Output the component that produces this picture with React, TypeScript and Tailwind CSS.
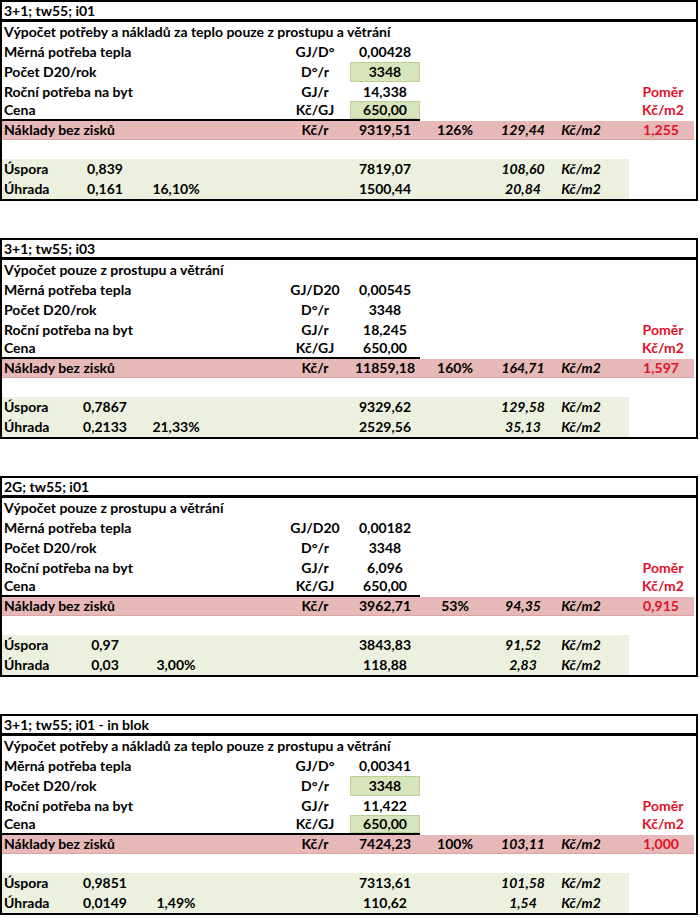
import React from "react";

type Block = {
  title: string;
  heading: string;
  unit1: string;
  merna: string;
  pocet: string;
  rocni: string;
  cena: string;
  boxed: boolean;
  naklady: string;
  pct: string;
  nakM2: string;
  pomer: string;
  uspora: string;
  usporaKc: string;
  usporaM2: string;
  uhrada: string;
  uhradaPct: string;
  uhradaKc: string;
  uhradaM2: string;
};

const blocks: Block[] = [
  {
    title: "3+1; tw55; i01",
    heading: "Výpočet potřeby a nákladů za teplo pouze z prostupu a větrání",
    unit1: "GJ/D°",
    merna: "0,00428",
    pocet: "3348",
    rocni: "14,338",
    cena: "650,00",
    boxed: true,
    naklady: "9319,51",
    pct: "126%",
    nakM2: "129,44",
    pomer: "1,255",
    uspora: "0,839",
    usporaKc: "7819,07",
    usporaM2: "108,60",
    uhrada: "0,161",
    uhradaPct: "16,10%",
    uhradaKc: "1500,44",
    uhradaM2: "20,84",
  },
  {
    title: "3+1; tw55; i03",
    heading: "Výpočet pouze z prostupu a větrání",
    unit1: "GJ/D20",
    merna: "0,00545",
    pocet: "3348",
    rocni: "18,245",
    cena: "650,00",
    boxed: false,
    naklady: "11859,18",
    pct: "160%",
    nakM2: "164,71",
    pomer: "1,597",
    uspora: "0,7867",
    usporaKc: "9329,62",
    usporaM2: "129,58",
    uhrada: "0,2133",
    uhradaPct: "21,33%",
    uhradaKc: "2529,56",
    uhradaM2: "35,13",
  },
  {
    title: "2G; tw55; i01",
    heading: "Výpočet pouze z prostupu a větrání",
    unit1: "GJ/D20",
    merna: "0,00182",
    pocet: "3348",
    rocni: "6,096",
    cena: "650,00",
    boxed: false,
    naklady: "3962,71",
    pct: "53%",
    nakM2: "94,35",
    pomer: "0,915",
    uspora: "0,97",
    usporaKc: "3843,83",
    usporaM2: "91,52",
    uhrada: "0,03",
    uhradaPct: "3,00%",
    uhradaKc: "118,88",
    uhradaM2: "2,83",
  },
  {
    title: "3+1; tw55; i01 - in blok",
    heading: "Výpočet potřeby a nákladů za teplo pouze z prostupu a větrání",
    unit1: "GJ/D°",
    merna: "0,00341",
    pocet: "3348",
    rocni: "11,422",
    cena: "650,00",
    boxed: true,
    naklady: "7424,23",
    pct: "100%",
    nakM2: "103,11",
    pomer: "1,000",
    uspora: "0,9851",
    usporaKc: "7313,61",
    usporaM2: "101,58",
    uhrada: "0,0149",
    uhradaPct: "1,49%",
    uhradaKc: "110,62",
    uhradaM2: "1,54",
  },
];

// column widths, measured from the sheet
const A = "w-[68px] shrink-0 pl-[2px] whitespace-nowrap";
const B = "w-[70px] shrink-0 text-center";
const C = "w-[72px] shrink-0 text-center";
const D = "w-[68px] shrink-0";
const E = "w-[70px] shrink-0 text-center";
const F = "w-[70px] shrink-0 text-center";
const G = "w-[70px] shrink-0 text-center";
const H = "w-[66px] shrink-0 text-center italic";
const I = "w-[50px] shrink-0 text-center italic";
const J = "w-[24px] shrink-0";
const K = "w-[66px] shrink-0 text-center text-[#e0102a]";

function ValueCell({ value, boxed }: { value: string; boxed: boolean }) {
  return (
    <div className={`${F} h-full flex items-center justify-center ${boxed ? "bg-[#d8e4bc] border border-[#bccf94]" : ""}`}>
      {value}
    </div>
  );
}

function Sheet({ b }: { b: Block }) {
  return (
    <div className="w-[698px] border-2 border-black text-black">
      <div className="h-[20px] flex items-center pl-[2px] border-b-[3px] border-black">{b.title}</div>

      <div className="h-[20px] flex items-center pl-[2px] whitespace-nowrap">{b.heading}</div>

      <div className="h-[20px] flex items-center">
        <div className={A}>Měrná potřeba tepla</div>
        <div className={B}></div>
        <div className={C}></div>
        <div className={D}></div>
        <div className={E}>{b.unit1}</div>
        <div className={F}>{b.merna}</div>
      </div>

      <div className="h-[20px] flex items-center">
        <div className={A}>Počet D20/rok</div>
        <div className={B}></div>
        <div className={C}></div>
        <div className={D}></div>
        <div className={E}>D°/r</div>
        <ValueCell value={b.pocet} boxed={b.boxed} />
      </div>

      <div className="h-[19px] flex items-center">
        <div className={A}>Roční potřeba na byt</div>
        <div className={B}></div>
        <div className={C}></div>
        <div className={D}></div>
        <div className={E}>GJ/r</div>
        <div className={F}>{b.rocni}</div>
        <div className={G}></div>
        <div className={H}></div>
        <div className={I}></div>
        <div className={J}></div>
        <div className={K}>Poměr</div>
      </div>

      <div className="h-[18px] flex items-center">
        <div className={A}>Cena</div>
        <div className={B}></div>
        <div className={C}></div>
        <div className={D}></div>
        <div className={E}>Kč/GJ</div>
        <ValueCell value={b.cena} boxed={b.boxed} />
        <div className={G}></div>
        <div className={H}></div>
        <div className={I}></div>
        <div className={J}></div>
        <div className={K}>Kč/m2</div>
      </div>

      <div className="h-[2px] w-[418px] bg-black"></div>

      <div className="h-[19px] w-[692px] flex items-center bg-[#e6b8b7] border-b border-[#d9a3a2]">
        <div className={A}>Náklady bez zisků</div>
        <div className={B}></div>
        <div className={C}></div>
        <div className={D}></div>
        <div className={E}>Kč/r</div>
        <div className={F}>{b.naklady}</div>
        <div className={G}>{b.pct}</div>
        <div className={H}>{b.nakM2}</div>
        <div className={I}>Kč/m2</div>
        <div className={J}></div>
        <div className="w-[62px] shrink-0 text-center text-[#e0102a]">{b.pomer}</div>
      </div>

      <div className="h-[19px]"></div>

      <div className="w-[627px] bg-[#ebf1de]">
        <div className="h-[20px] flex items-center">
          <div className={A}>Úspora</div>
          <div className={B}>{b.uspora}</div>
          <div className={C}></div>
          <div className={D}></div>
          <div className={E}></div>
          <div className={F}>{b.usporaKc}</div>
          <div className={G}></div>
          <div className={H}>{b.usporaM2}</div>
          <div className={I}>Kč/m2</div>
        </div>
        <div className="h-[20px] flex items-center">
          <div className={A}>Úhrada</div>
          <div className={B}>{b.uhrada}</div>
          <div className={C}>{b.uhradaPct}</div>
          <div className={D}></div>
          <div className={E}></div>
          <div className={F}>{b.uhradaKc}</div>
          <div className={G}></div>
          <div className={H}>{b.uhradaM2}</div>
          <div className={I}>Kč/m2</div>
        </div>
      </div>
    </div>
  );
}

export default function App() {
  return (
    <div className="w-[700px] h-[918px] bg-white overflow-hidden font-bold text-[14px] leading-none font-['Lato','Liberation_Sans',sans-serif]">
      <div className="flex flex-col gap-[37px]">
        {blocks.map((b) => (
          <Sheet key={b.title} b={b} />
        ))}
      </div>
    </div>
  );
}
